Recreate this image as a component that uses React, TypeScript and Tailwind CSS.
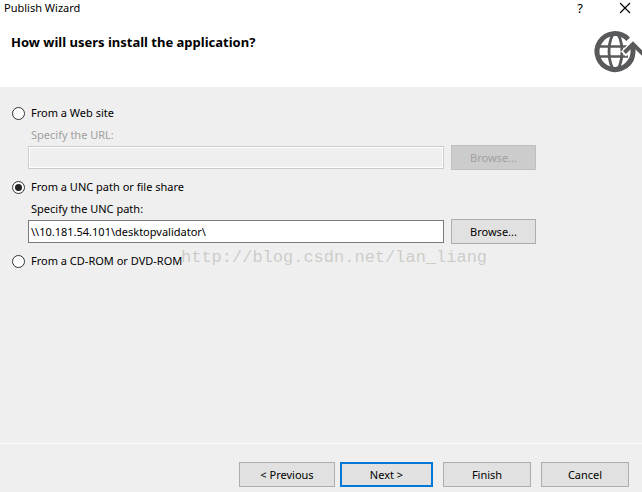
import { useState } from "react";
import type { ReactNode } from "react";

type Source = "web" | "unc" | "disc";

function PublishIcon() {
  return (
    <svg className="h-[46px] w-[50px] shrink-0" viewBox="0 0 50 46" fill="none" aria-hidden="true">
      <g stroke="#58595b">
        <path d="M6 16.5H36M6 26.5H36" strokeWidth="2.6" />
        <ellipse cx="23.5" cy="21.5" rx="6.5" ry="18" strokeWidth="2.8" />
        <path d="M36.2 9.3A18 18 0 1 0 41 21.5" strokeWidth="5" />
      </g>
      <path d="M31.5 24L41 14L52 25" stroke="white" strokeWidth="7" />
      <path d="M41 18V28" stroke="white" strokeWidth="8" />
      <path d="M41 14V22A18 18 0 0 1 33 36.5" stroke="#58595b" strokeWidth="5" />
      <path d="M32.5 22.5L41 14L51 24" stroke="#58595b" strokeWidth="4" />
    </svg>
  );
}

function SourceOption({
  value,
  selected,
  onSelect,
  children,
}: {
  value: Source;
  selected: Source;
  onSelect: (value: Source) => void;
  children: ReactNode;
}) {
  return (
    <label className="flex h-6 items-center gap-1.5">
      <input
        type="radio"
        name="source"
        checked={selected === value}
        onChange={() => onSelect(value)}
        className="grid size-[13px] appearance-none place-items-center rounded-full border border-[#333] bg-white before:size-[7px] before:rounded-full checked:before:bg-[#222]"
      />
      {children}
    </label>
  );
}

function PathField({
  id,
  label,
  value,
  onChange,
  disabled,
}: {
  id: string;
  label: string;
  value: string;
  onChange: (value: string) => void;
  disabled: boolean;
}) {
  return (
    <div className="mb-[5px] pl-4">
      <label htmlFor={id} className={`flex h-5 items-center pl-[3px] ${disabled ? "text-[#a0a0a0]" : ""}`}>
        {label}
      </label>
      <div className="flex items-center gap-[7px]">
        <input
          id={id}
          type="text"
          value={value}
          disabled={disabled}
          onChange={(event) => onChange(event.target.value)}
          className="h-[23px] min-w-0 flex-1 border border-[#7a7a7a] bg-white px-0.5 disabled:border-[#ccc] disabled:bg-[#efefef] disabled:inset-ring disabled:inset-ring-white"
        />
        <button
          type="button"
          disabled={disabled}
          className="h-[25px] w-[85px] border border-[#adadad] bg-[#e1e1e1] disabled:border-[#bfbfbf] disabled:bg-[#ccc] disabled:text-[#a0a0a0]"
        >
          Browse...
        </button>
      </div>
    </div>
  );
}

export default function App() {
  const [source, setSource] = useState<Source>("unc");
  const [url, setUrl] = useState("");
  const [path, setPath] = useState("\\\\10.181.54.101\\desktopvalidator\\");

  return (
    <div className="flex min-h-screen flex-col bg-[#efefef] font-['Noto_Sans',sans-serif] text-[11px] leading-4 text-black">
      <header className="bg-white pb-[11px]">
        <div className="flex h-4 items-center pr-[11px] pl-1">
          <span className="flex-1">Publish Wizard</span>
          <button type="button" aria-label="Help" className="mr-9 text-[13px] leading-4">
            ?
          </button>
          <button type="button" aria-label="Close">
            <svg className="size-3" viewBox="0 0 12 12" fill="none" stroke="black" aria-hidden="true">
              <path d="M1 1L11 11M11 1L1 11" strokeWidth="1.2" />
            </svg>
          </button>
        </div>
        <div className="flex justify-between pt-[14px] pl-[11px]">
          <h1 className="text-[13px] leading-6 font-bold">How will users install the application?</h1>
          <PublishIcon />
        </div>
      </header>

      <main className="relative flex-1 pt-[14px] pl-3">
        <div className="w-full max-w-[524px]">
          <SourceOption value="web" selected={source} onSelect={setSource}>
            From a Web site
          </SourceOption>
          <PathField id="url" label="Specify the URL:" value={url} onChange={setUrl} disabled={source !== "web"} />
          <SourceOption value="unc" selected={source} onSelect={setSource}>
            From a UNC path or file share
          </SourceOption>
          <PathField id="path" label="Specify the UNC path:" value={path} onChange={setPath} disabled={source !== "unc"} />
          <SourceOption value="disc" selected={source} onSelect={setSource}>
            From a CD-ROM or DVD-ROM
          </SourceOption>
        </div>
        <span className="pointer-events-none absolute top-[159px] left-[181px] font-['Liberation_Mono',monospace] text-[17px] leading-6 text-[#a0a096]/45">
          http://blog.csdn.net/lan_liang
        </span>
      </main>

      <footer className="flex justify-end border-t border-white pt-[18px] pr-[13px] pb-[5px]">
        <button type="button" className="mr-[5px] h-[25px] w-24 border border-[#adadad] bg-[#e1e1e1]">
          &lt; Previous
        </button>
        <button type="button" className="mr-2.5 h-[25px] w-[93px] border-2 border-[#0078d7] bg-[#e1e1e1]">
          Next &gt;
        </button>
        <button type="button" className="mr-2.5 h-[25px] w-[88px] border border-[#adadad] bg-[#e1e1e1]">
          Finish
        </button>
        <button type="button" className="h-[25px] w-[88px] border border-[#adadad] bg-[#e1e1e1]">
          Cancel
        </button>
      </footer>
    </div>
  );
}
